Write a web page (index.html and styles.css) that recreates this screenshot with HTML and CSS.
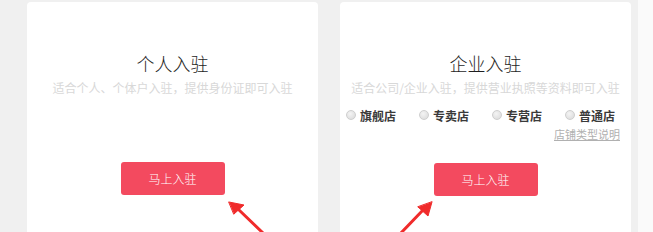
FILE: index.html
```html
<!DOCTYPE html>
<html lang="zh">
<head>
<meta charset="utf-8">
<link rel="stylesheet" href="styles.css">
</head>
<body>
<div class="page">
  <div class="card">
    <h2 class="title">个人入驻</h2>
    <p class="desc">适合个人、个体户入驻，提供身份证即可入驻</p>
    <a class="btn btn-personal">马上入驻</a>
  </div>
  <div class="card">
    <h2 class="title">企业入驻</h2>
    <p class="desc">适合公司/企业入驻，提供营业执照等资料即可入驻</p>
    <div class="types">
      <label class="type"><span class="radio"></span>旗舰店</label>
      <label class="type"><span class="radio"></span>专卖店</label>
      <label class="type"><span class="radio"></span>专营店</label>
      <label class="type"><span class="radio"></span>普通店</label>
    </div>
    <div class="help"><a class="help-link">店铺类型说明</a></div>
    <a class="btn btn-company">马上入驻</a>
  </div>
  <div class="edge"></div>
</div>
<svg class="arrows" width="653" height="232" viewBox="0 0 653 232">
  <g fill="#f02b2b" stroke="#f02b2b" stroke-linecap="round">
    <line x1="238" y1="209" x2="264" y2="234" stroke-width="3"/>
    <polygon points="229,202 244,205 234,214" stroke-width="1"/>
    <line x1="424" y1="209" x2="400" y2="234" stroke-width="3"/>
    <polygon points="432,202 428,216 418,207" stroke-width="1"/>
  </g>
</svg>
</body>
</html>
```
FILE: styles.css
```css
html, body {
  margin: 0;
  padding: 0;
  background: #f0f0f0;
}
body {
  width: 653px;
  height: 232px;
  overflow: hidden;
  position: relative;
  font-family: "Noto Sans CJK SC", "Liberation Sans", sans-serif;
}
.page {
  display: flex;
  gap: 22px;
  padding: 2px 0 0 27px;
  height: 230px;
}
.card {
  width: 291px;
  background: #fff;
  border-radius: 4px 4px 0 0;
  display: flex;
  flex-direction: column;
  align-items: center;
  padding-top: 49px;
  box-sizing: border-box;
}
.edge {
  flex: 1;
  margin-left: -15px;
  background: #fafafa;
  margin-top: -2px;
}
.title {
  margin: 0;
  font-size: 18px;
  font-weight: 300;
  line-height: 24px;
  color: #1e1e1e;
}
.desc {
  margin: 4px 0 0;
  font-size: 12px;
  line-height: 18px;
  color: #d8d8d8;
}
.btn {
  display: flex;
  align-items: center;
  justify-content: center;
  width: 104px;
  height: 33px;
  background: #f34a5f;
  border-radius: 3px;
  color: #fff;
  font-size: 12px;
  font-weight: 300;
}
.btn-personal {
  margin-top: 65px;
}
.btn-company {
  margin-top: 21px;
}
.types {
  align-self: stretch;
  display: flex;
  justify-content: space-between;
  padding: 0 16px 0 6px;
  margin-top: 9px;
  height: 18px;
  align-items: center;
}
.type {
  display: flex;
  align-items: center;
  gap: 4px;
  font-size: 12px;
  font-weight: 700;
  color: #3a3a3a;
}
.radio {
  width: 8px;
  height: 8px;
  border-radius: 50%;
  border: 1px solid #cfcfcf;
  background: radial-gradient(circle at 40% 35%, #f4f4f4, #d8d8d8);
}
.help {
  align-self: stretch;
  display: flex;
  justify-content: flex-end;
  padding-right: 11px;
  margin-top: 2px;
  height: 16px;
}
.help-link {
  font-size: 11px;
  line-height: 16px;
  color: #b0b0b0;
  text-decoration: underline;
}
.arrows {
  position: absolute;
  left: 0;
  top: 0;
  pointer-events: none;
}
```
